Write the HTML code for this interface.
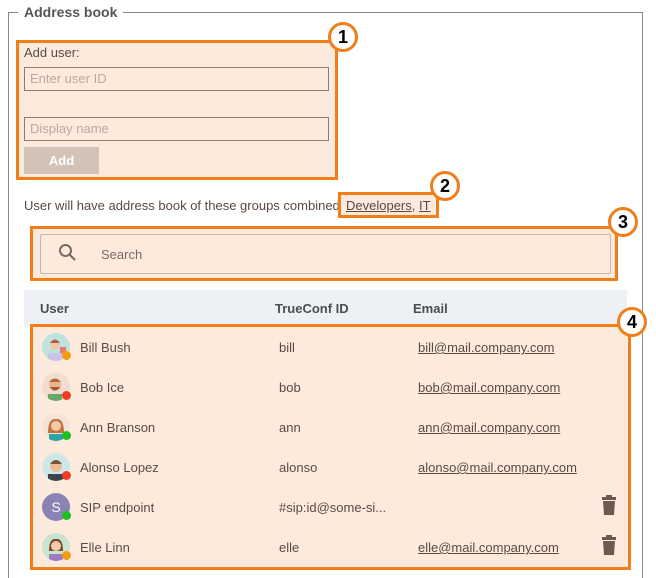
<!DOCTYPE html>
<html><head><meta charset="utf-8"><style>
*{margin:0;padding:0;box-sizing:border-box}
html,body{width:656px;height:578px;overflow:hidden}
body{background:#fff;position:relative;font-family:"Liberation Sans",Arial,sans-serif;font-size:13px;color:#5a4a42}
.a{position:absolute}
.fs{left:8px;top:12px;width:635px;height:580px;border:1px solid #8a8a8a;border-bottom:none}
.leg{left:18px;top:4px;background:#fff;padding:0 6px;font-weight:bold;font-size:14px;color:#555}
.ob{border:3px solid #f07f1a;background:#fcebdd}
.num{width:30px;height:30px;border-radius:50%;border:3px solid #f07f1a;background:#fff;font-weight:bold;font-size:18px;color:#000;text-align:center;line-height:24px}
.inp{border:1px solid #8e7a70;background:#fcebdd;color:#b8a89e;padding-left:5px;line-height:22px}
.row{left:0;width:600px;height:40px}
.av{left:9px;top:6px;width:28px;height:28px;border-radius:50%;overflow:hidden}
.dot{width:9px;height:9px;border-radius:50%}
.c1{left:47px;top:13px}.c2{left:246px;top:13px}.c3{left:385px;top:13px;text-decoration:underline}
.th{font-weight:bold;color:#4d4d4d;font-size:13px}
</style></head><body>
<div class="a fs"></div>
<div class="a leg">Address book</div>

<div class="a ob" style="left:16px;top:40px;width:322px;height:140px"></div>
<div class="a" style="left:24px;top:45px">Add user:</div>
<div class="a inp" style="left:24px;top:67px;width:305px;height:24px">Enter user ID</div>
<div class="a inp" style="left:24px;top:117px;width:305px;height:24px">Display name</div>
<div class="a" style="left:24px;top:147px;width:75px;height:27px;background:#d3c2b6;color:#fff;font-weight:bold;text-align:center;line-height:27px">Add</div>
<div class="a num" style="left:328px;top:22px">1</div>

<div class="a" style="left:24px;top:198px">User will have address book of these groups combined</div>
<div class="a ob" style="left:338px;top:192px;width:101px;height:26px"></div>
<div class="a" style="left:346px;top:198px"><u>Developers</u>, <u>IT</u></div>
<div class="a num" style="left:430px;top:171px">2</div>

<div class="a ob" style="left:30px;top:226px;width:588px;height:55px"></div>
<div class="a" style="left:40px;top:234px;width:571px;height:40px;border:1px solid #c9b6a8;border-radius:2px"></div>
<svg class="a" style="left:58px;top:243px" width="20" height="20" viewBox="0 0 20 20"><circle cx="7.5" cy="7.5" r="5.5" fill="none" stroke="#7a6a62" stroke-width="2"/><path d="M11.5 11.5L17 17" stroke="#7a6a62" stroke-width="2.2"/></svg>
<div class="a" style="left:101px;top:247px;color:#7a6a62">Search</div>
<div class="a num" style="left:608px;top:207px">3</div>

<div class="a" style="left:24px;top:290px;width:603px;height:36px;background:#edf1f5"></div>
<div class="a th" style="left:40px;top:301px">User</div>
<div class="a th" style="left:275px;top:301px">TrueConf ID</div>
<div class="a th" style="left:413px;top:301px">Email</div>

<div class="a ob" style="left:30px;top:324px;width:601px;height:246px"></div>
<div class="a num" style="left:617px;top:307px">4</div>

<div class="a" style="left:33px;top:327px">
 <div class="a row" style="top:0">
  <svg class="a av" viewBox="0 0 28 28"><rect width="28" height="28" fill="#bfe3dc"/><rect x="18" y="14" width="6" height="8" fill="#e37a6a"/><circle cx="13" cy="12" r="5" fill="#f1c6a5"/><path d="M8 10q5-7 10 0" fill="#b0603a"/><rect x="6" y="20" width="14" height="8" fill="#c9c3e8"/></svg>
  <div class="a dot" style="left:29px;top:24px;background:#f39c12"></div>
  <div class="a c1">Bill Bush</div><div class="a c2">bill</div><div class="a c3">bill@mail.company.com</div></div>
 <div class="a row" style="top:40px">
  <svg class="a av" viewBox="0 0 28 28"><rect width="28" height="28" fill="#f2dcd0"/><circle cx="13" cy="12" r="6" fill="#e8b590"/><path d="M7 9q6-7 12 0" fill="#b5623a"/><path d="M8 14q5 7 10 0" fill="#a9552f"/><rect x="6" y="21" width="14" height="7" fill="#6aa56a"/></svg>
  <div class="a dot" style="left:29px;top:24px;background:#ef3b24"></div>
  <div class="a c1">Bob Ice</div><div class="a c2">bob</div><div class="a c3">bob@mail.company.com</div></div>
 <div class="a row" style="top:80px">
  <svg class="a av" viewBox="0 0 28 28"><rect width="28" height="28" fill="#f5e3d8"/><path d="M6 20q0-15 8-14q8-1 8 14z" fill="#c0723a"/><circle cx="14" cy="13" r="5" fill="#f4c9a8"/><rect x="7" y="21" width="14" height="7" fill="#2aa5a8"/></svg>
  <div class="a dot" style="left:29px;top:24px;background:#1fbf1f"></div>
  <div class="a c1">Ann Branson</div><div class="a c2">ann</div><div class="a c3">ann@mail.company.com</div></div>
 <div class="a row" style="top:120px">
  <svg class="a av" viewBox="0 0 28 28"><rect width="28" height="28" fill="#cde8e6"/><circle cx="14" cy="13" r="6" fill="#eebd98"/><path d="M8 11q6-8 12 0" fill="#7a5236"/><rect x="6" y="21" width="16" height="7" fill="#3b4448"/></svg>
  <div class="a dot" style="left:29px;top:24px;background:#ef3b24"></div>
  <div class="a c1">Alonso Lopez</div><div class="a c2">alonso</div><div class="a c3">alonso@mail.company.com</div></div>
 <div class="a row" style="top:160px">
  <div class="a av" style="background:#8a83b3;color:#fff;text-align:center;line-height:28px;font-size:14px">S</div>
  <div class="a dot" style="left:29px;top:24px;background:#1fbf1f"></div>
  <div class="a c1">SIP endpoint</div><div class="a c2">#sip:id@some-si...</div>
  <svg class="a" style="left:567px;top:8px" width="18" height="20" viewBox="0 0 18 20"><rect x="2" y="2" width="14" height="3" fill="#6b5a50"/><rect x="6" y="0" width="6" height="3" fill="#6b5a50"/><path d="M3 6h12l-1 14H4z" fill="#6b5a50"/></svg></div>
 <div class="a row" style="top:200px">
  <svg class="a av" viewBox="0 0 28 28"><rect width="28" height="28" fill="#c8e6cf"/><path d="M7 18q0-13 7-12q7-1 7 12z" fill="#7a4a2e"/><circle cx="14" cy="13" r="5" fill="#f4c9a8"/><rect x="7" y="21" width="14" height="7" fill="#a07ac0"/></svg>
  <div class="a dot" style="left:29px;top:24px;background:#f39c12"></div>
  <div class="a c1">Elle Linn</div><div class="a c2">elle</div><div class="a c3">elle@mail.company.com</div>
  <svg class="a" style="left:567px;top:8px" width="18" height="20" viewBox="0 0 18 20"><rect x="2" y="2" width="14" height="3" fill="#6b5a50"/><rect x="6" y="0" width="6" height="3" fill="#6b5a50"/><path d="M3 6h12l-1 14H4z" fill="#6b5a50"/></svg></div>
</div>
</body></html>
